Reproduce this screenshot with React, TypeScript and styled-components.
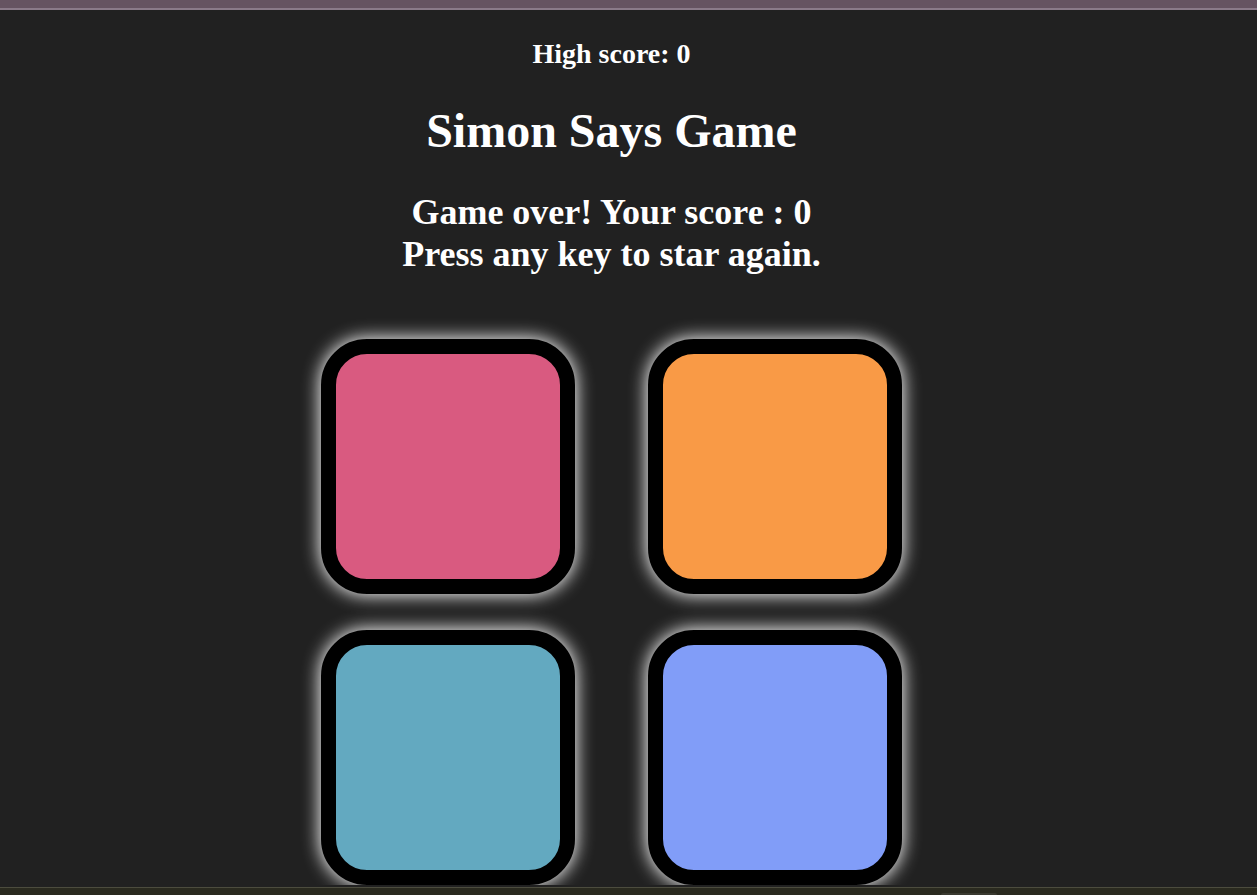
import React from "react";
import styled, { createGlobalStyle } from "styled-components";

const GlobalStyle = createGlobalStyle`
  html, body {
    margin: 0;
    padding: 0;
    background: #212121;
    overflow: hidden;
  }
  body {
    font-family: "Liberation Serif", "Times New Roman", serif;
  }
`;

const TopBar = styled.div`
  height: 8px;
  background: #665361;
  border-bottom: 2px solid #8b7a89;
`;

const Main = styled.main`
  width: 1223px;
  text-align: center;
  color: #ffffff;
`;

const HighScore = styled.h3`
  margin: 28px 0 0;
  font-size: 28px;
  line-height: 32px;
  font-weight: bold;
`;

const Title = styled.h1`
  margin: 33px 0 0;
  font-size: 48px;
  line-height: 55px;
  font-weight: bold;
`;

const Message = styled.h2`
  margin: 33px 0 0;
  font-size: 36px;
  line-height: 42px;
  font-weight: bold;
`;

const Board = styled.div`
  margin-top: 64px;
  display: grid;
  grid-template-columns: 254px 254px;
  column-gap: 73px;
  row-gap: 36px;
  justify-content: center;
`;

const Pad = styled.div<{ $color: string }>`
  width: 254px;
  height: 255px;
  box-sizing: border-box;
  border: 15px solid #000;
  border-radius: 46px;
  background: ${(p) => p.$color};
  box-shadow: 0 0 18px 1px #ffffff;
`;

const BottomBar = styled.div`
  position: fixed;
  left: 0;
  right: 0;
  bottom: 0;
  height: 7px;
  background: #2a2a1f;
  border-top: 1px solid #4c4c3e;
`;

const BottomTab = styled.div`
  position: absolute;
  left: 941px;
  bottom: 0;
  width: 56px;
  height: 2px;
  border-radius: 4px 4px 0 0;
  background: #3a3a30;
`;

const pads = ["#d95a80", "#f99a46", "#63a9c0", "#819df8"];

export default function App() {
  return (
    <>
      <GlobalStyle />
      <TopBar />
      <Main>
        <HighScore>High score: 0</HighScore>
        <Title>Simon Says Game</Title>
        <Message>
          Game over! Your score : 0
          <br />
          Press any key to star again.
        </Message>
        <Board>
          {pads.map((c) => (
            <Pad key={c} $color={c} />
          ))}
        </Board>
      </Main>
      <BottomBar>
        <BottomTab />
      </BottomBar>
    </>
  );
}
